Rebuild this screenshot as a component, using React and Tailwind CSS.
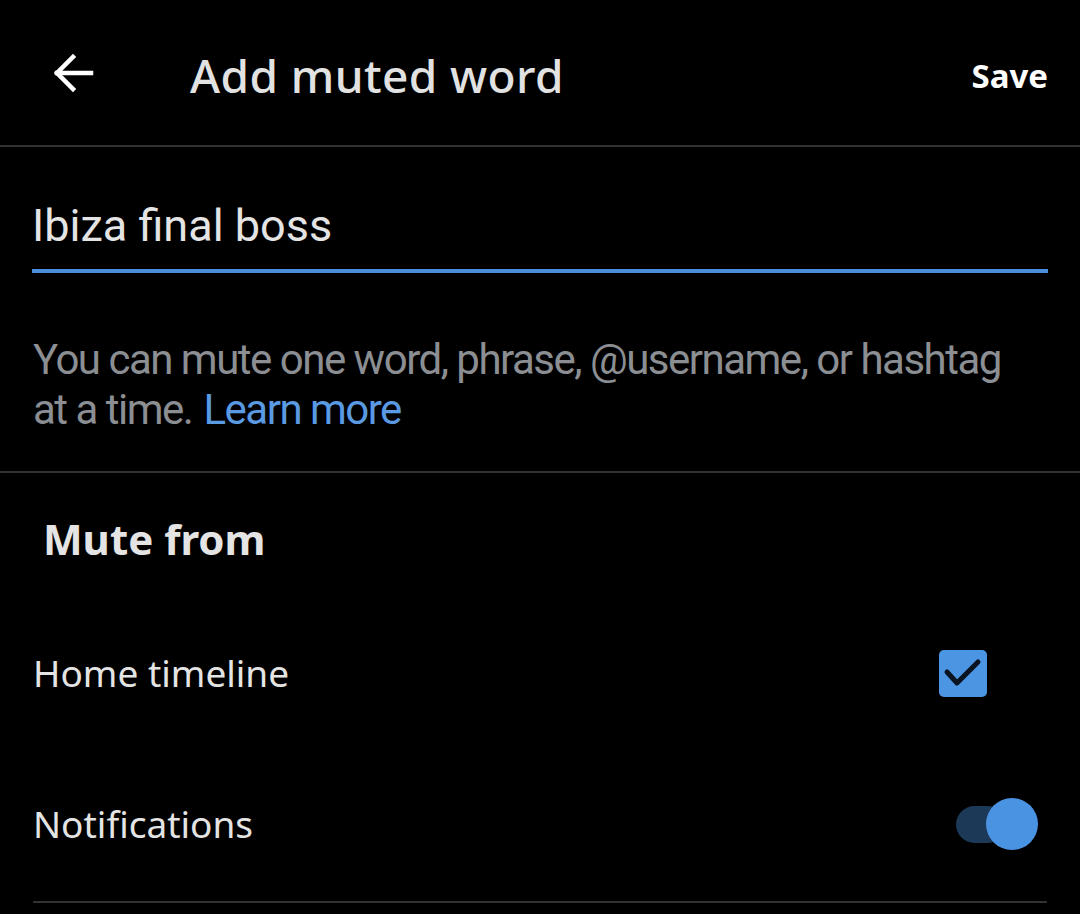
import React, { useState } from "react";

const ArrowLeft = () => (
  <svg width="44" height="44" viewBox="0 0 44 44" fill="none" stroke="#ffffff" strokeWidth="4.5" strokeLinecap="square">
    <path d="M5 22 H39" />
    <path d="M21 6 L5 22 L21 38" />
  </svg>
);

const App = () => {
  const [home, setHome] = useState(true);
  const [notif, setNotif] = useState(true);

  return (
    <div className="w-[1080px] h-[914px] bg-black text-[#e7e7e7] overflow-hidden" style={{ fontFamily: "'Noto Sans', Roboto, sans-serif" }}>
      {/* Header */}
      <div className="h-[147px] pt-[6px] flex items-center border-b-2 border-[#2f3336]">
        <div className="w-[190px] pl-[52px] flex items-center -mt-[6px]">
          <ArrowLeft />
        </div>
        <h1 className="text-[46px] font-medium tracking-[0.4px] text-[#e2e2e2]">Add muted word</h1>
        <button className="ml-auto mr-[32px] text-[33px] font-bold text-white">Save</button>
      </div>

      {/* Input */}
      <div className="px-[32px] pt-[50px]">
        <div className="pb-[14px] border-b-4 border-[#4b8fdc]" style={{ fontFamily: "Roboto, sans-serif" }}>
          <input
            defaultValue="Ibiza final boss"
            className="w-full bg-transparent outline-none text-[45px] leading-[58px] text-[#e4e4e4]"
          />
        </div>
      </div>

      {/* Help text */}
      <div
        className="px-[33px] pt-[62px] pb-[36px] border-b-2 border-[#2f3336] text-[42px] leading-[50px] text-[#8b8e92] tracking-[-1.5px]"
        style={{ fontFamily: "Roboto, sans-serif" }}
      >
        <div>You can mute one word, phrase, @username, or hashtag</div>
        <div className="flex gap-[11px]">
          <span>at a time.</span>
          <span className="text-[#5a9ae3]">Learn more</span>
        </div>
      </div>

      {/* Mute from */}
      <div className="px-[43px] pt-[34px]">
        <h2 className="text-[42px] font-bold text-[#e4e4e4]">Mute from</h2>
      </div>

      <div className="px-[33px]">
        <div className="h-[152px] flex items-center mt-[27px]">
          <span className="text-[37px] text-[#e4e4e4]">Home timeline</span>
          <button
            onClick={() => setHome(!home)}
            className={`ml-auto mr-[60px] w-[48px] h-[47px] rounded-[5px] flex items-center justify-center ${home ? "bg-[#4b95e3]" : "border-2 border-gray-500"}`}
          >
            {home && (
              <svg width="48" height="47" viewBox="0 0 48 47" fill="none" stroke="#0a1420" strokeWidth="5" strokeLinecap="round" strokeLinejoin="round">
                <path d="M8 22 L18 33 L39 12" />
              </svg>
            )}
          </button>
        </div>

        <div className="h-[154px] flex items-center pb-[2px] border-b-2 border-[#2f3336]">
          <span className="text-[37px] text-[#e4e4e4]">Notifications</span>
          <button
            onClick={() => setNotif(!notif)}
            className="ml-auto mr-[9px] relative w-[82px] h-[52px] flex items-center"
          >
            <span className={`absolute left-0 w-[50px] h-[37px] rounded-full ${notif ? "bg-[#1c3a58]" : "bg-gray-700"}`} />
            <span className={`absolute w-[52px] h-[52px] rounded-full bg-[#4a92e2] ${notif ? "left-[30px]" : "left-0"}`} />
          </button>
        </div>
      </div>
    </div>
  );
};

export default App;
